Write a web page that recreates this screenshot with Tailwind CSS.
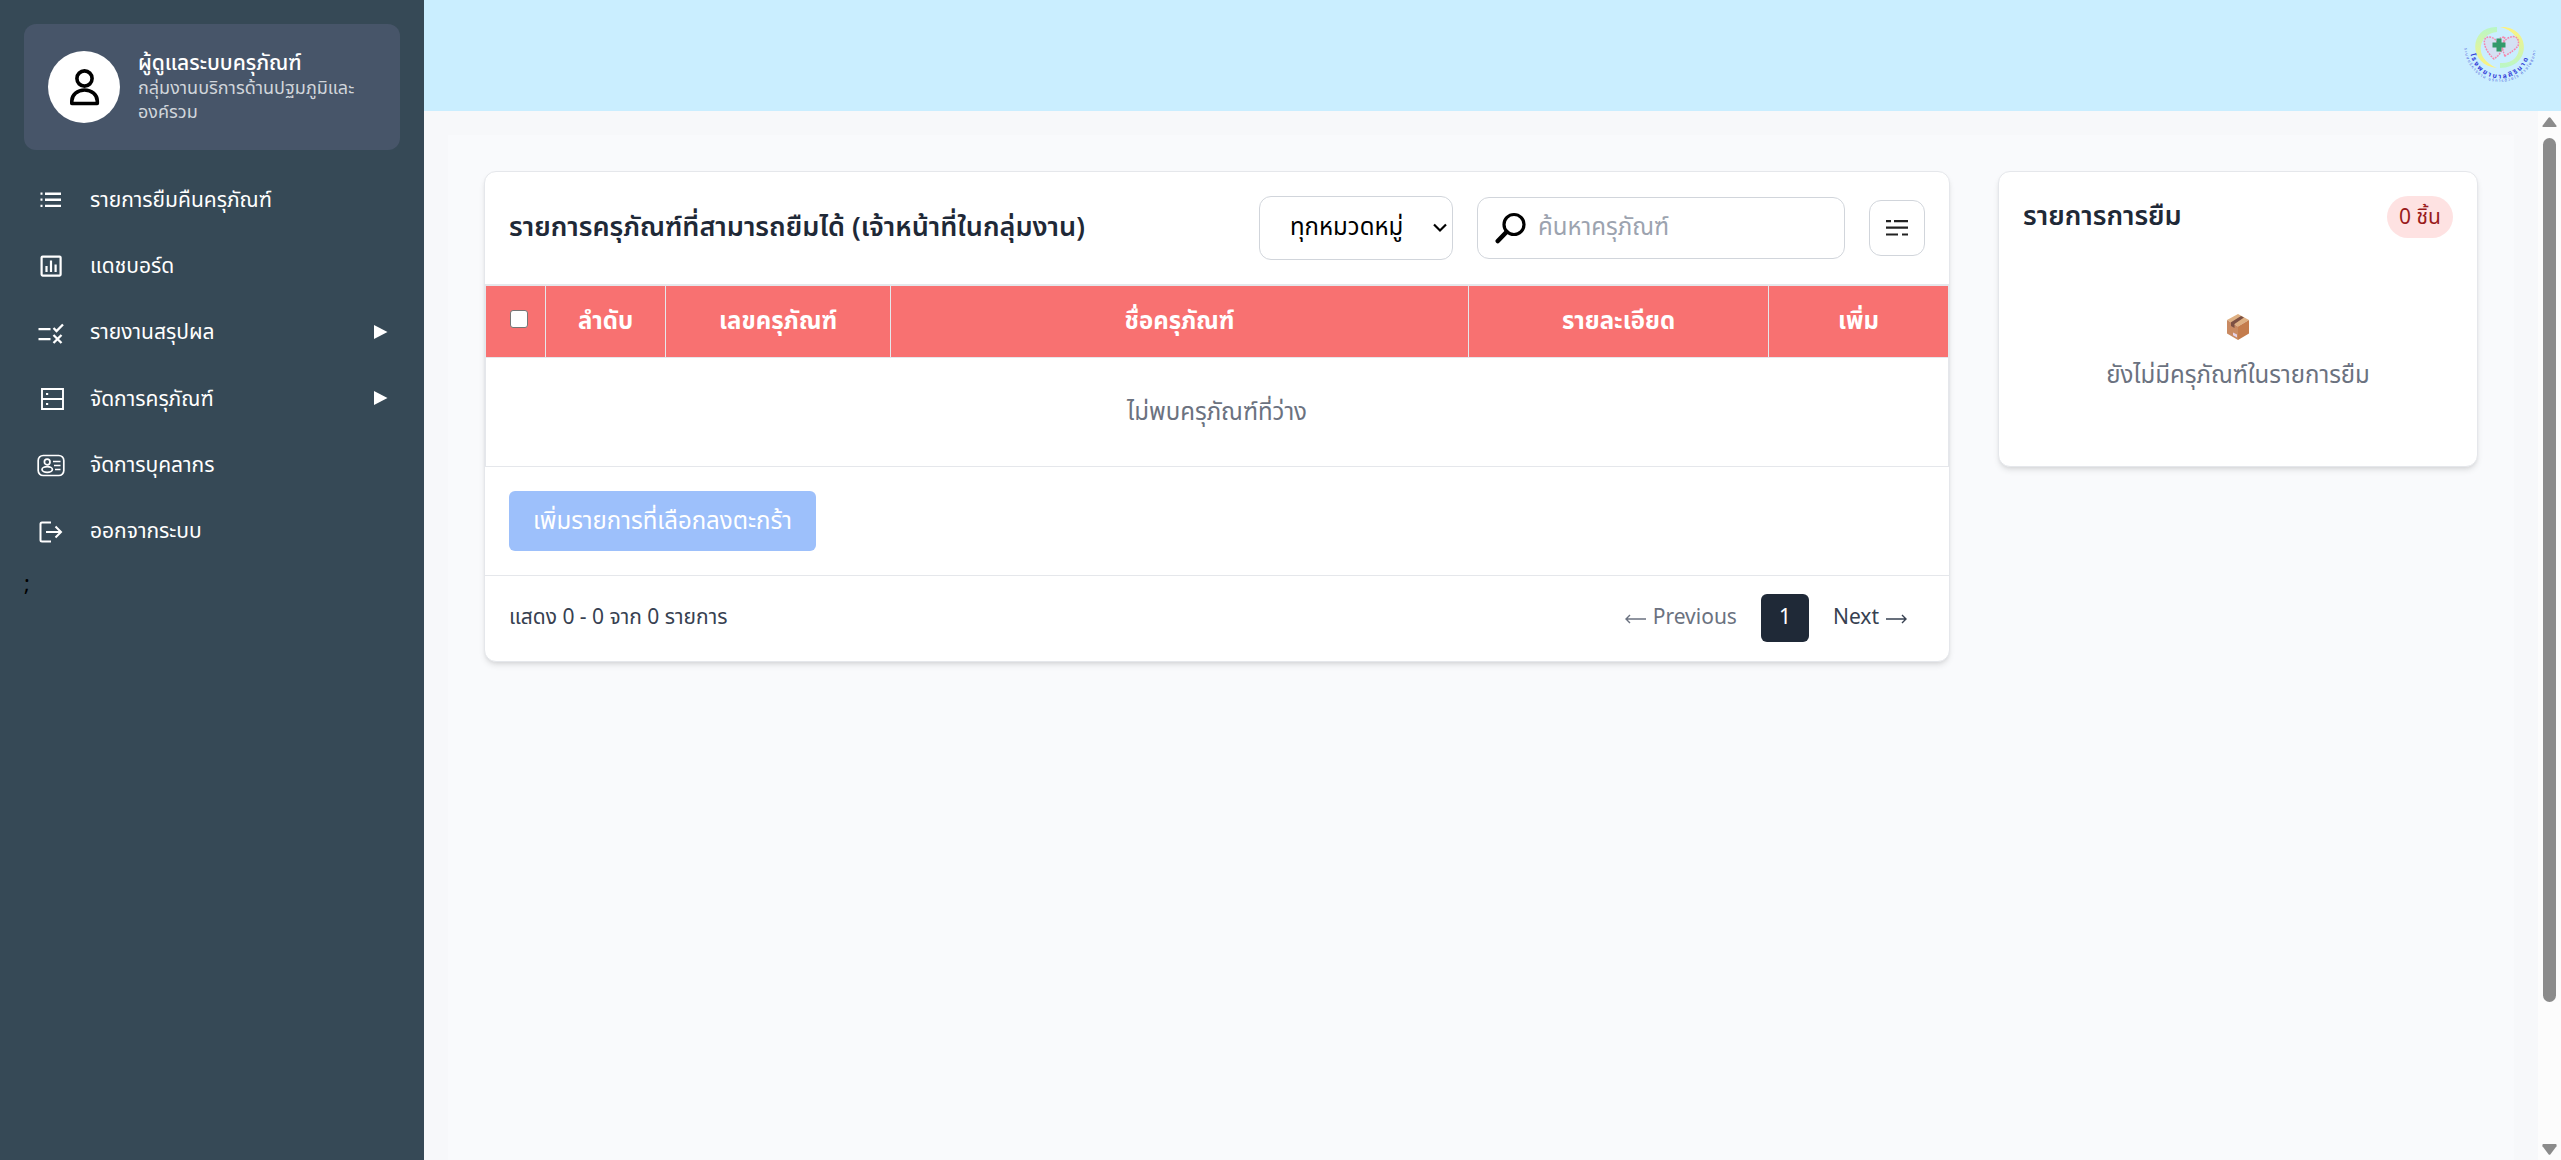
<!DOCTYPE html>
<html lang="th">
<head>
<meta charset="utf-8">
<title>รายการครุภัณฑ์</title>
<script src="https://cdn.jsdelivr.net/npm/@tailwindcss/browser@4"></script>
</head>
<body class="flex h-[1160px] w-[2561px] overflow-hidden bg-[#f7f8fa] font-['Noto_Sans','Noto_Sans_Thai','Noto_Sans_Thai_Looped',sans-serif] text-[21px] leading-[30px] text-black">
<aside class="w-[424px] shrink-0 bg-[#364956] p-6 text-white">
  <div class="flex h-[126px] items-center gap-[18px] rounded-xl bg-[#475569] px-6">
    <div class="flex size-[72px] shrink-0 items-center justify-center rounded-full bg-white">
      <svg class="size-[42px]" viewBox="0 0 42 42" fill="none" stroke="#000" stroke-width="3.600" stroke-linejoin="round"><circle cx="21.500" cy="12.500" r="7.600"/><path d="M8.800 37.500h25.500v-2.500a12.750 11 0 0 0-25.500 0z"/></svg>
    </div>
    <div class="min-w-0 pb-px">
      <div class="text-[21px] leading-[25px] font-medium whitespace-nowrap">ผู้ดูแลระบบครุภัณฑ์</div>
      <div class="text-[18px] leading-6 whitespace-nowrap text-[#d1d5db]">กลุ่มงานบริการด้านปฐมภูมิและ<br>องค์รวม</div>
    </div>
  </div>
  <nav class="mt-[17px] flex flex-col">
    <a class="flex h-[66.300px] items-center px-3"><svg class="mr-[24px] size-[30px]" viewBox="0 0 30 30" fill="#fff"><path d="M9 7.500h16v2.400H9zM9 13.600h16v2.400H9zM9 19.700h16v2.400H9zM4.500 7.500h2v2.200h-2zM4.500 13.600h2v2.200h-2zM4.500 19.700h2v2.200h-2z"/></svg><span class="pb-[2px]">รายการยืมคืนครุภัณฑ์</span></a>
    <a class="flex h-[66.300px] items-center px-3"><svg class="mr-[24px] size-[30px]" viewBox="0 0 30 30" fill="none" stroke="#fff" stroke-width="2.200"><rect x="5.600" y="5.600" width="19" height="19" rx="1"/><path d="M10.500 15v6M15 9.500V21M19.600 13.500V21"/></svg><span class="pb-[2px]">แดชบอร์ด</span></a>
    <a class="flex h-[66.300px] items-center px-3"><svg class="mr-[24px] size-[30px]" viewBox="0 0 30 30" fill="none" stroke="#fff" stroke-width="2.300"><path d="M2.500 11.200h12M2.500 21.200h12M17.500 10l3 3 6.500-6.500M17.500 17l8 8M25.500 17l-8 8"/></svg><span class="pb-[3px]">รายงานสรุปผล</span><svg class="mb-[2px] ml-auto h-4 w-[14px]" viewBox="0 0 14 16" fill="#fff"><path d="M0 1v14l13.500-7z"/></svg></a>
    <a class="flex h-[66.300px] items-center px-3"><svg class="mr-[24px] size-[30px]" viewBox="0 0 30 30" fill="none" stroke="#fff" stroke-width="1.900"><path d="M6 5h21v20H6zM6 15h21"/><path d="M10 10h2.200M10 20h2.200" stroke-width="2.200"/></svg><span class="pb-[3px]">จัดการครุภัณฑ์</span><svg class="mb-[2px] ml-auto h-4 w-[14px]" viewBox="0 0 14 16" fill="#fff"><path d="M0 1v14l13.500-7z"/></svg></a>
    <a class="flex h-[66.300px] items-center px-3"><svg class="mr-[24px] size-[30px]" viewBox="0 0 30 30" fill="none" stroke="#fff" stroke-width="1.700"><rect x="2.200" y="5.500" width="25.600" height="20" rx="5"/><circle cx="11.200" cy="12" r="2.800"/><ellipse cx="11.200" cy="19.500" rx="5.200" ry="2.800"/><path d="M17 11.500h7.500M18 15.500h6.500M19 19.500h5.500"/></svg><span class="pb-[3px]">จัดการบุคลากร</span></a>
    <a class="flex h-[66.300px] items-center px-3"><svg class="mr-[24px] size-[30px]" viewBox="0 0 30 30" fill="none" stroke="#fff" stroke-width="2"><path d="M15 5.500H6Q4.500 5.500 4.500 7v16q0 1.500 1.500 1.500h9M10 15h15M19.500 9.500L25 15l-5.500 5.500"/></svg><span class="pb-1">ออกจากระบบ</span></a>
  </nav>
  <div class="mt-px text-[22px] leading-8 text-black">;</div>
</aside>
<div class="flex min-w-0 flex-1 flex-col">
  <header class="flex h-[111px] shrink-0 justify-end bg-[#caeeff] pt-[18px] pr-[20px]">
    <svg class="h-[74px] w-[80px] overflow-visible" viewBox="0 0 80 74">
      <defs>
        <linearGradient id="ga" x1="0" y1="0" x2="0" y2="1"><stop offset="0" stop-color="#b8f7c8"/><stop offset="1" stop-color="#fff27d"/></linearGradient>
        <linearGradient id="gb" x1="0" y1="0" x2="0" y2="1"><stop offset="0" stop-color="#fff27d"/><stop offset="1" stop-color="#b8f7c8"/></linearGradient>
        <path id="arc1" d="M9.500 36A30 30 0 0 0 68.500 36"/>
        <path id="arc2" d="M3.500 30A35.800 35.800 0 0 0 75 30"/>
      </defs>
      <path fill="url(#ga)" d="M36 9C8 8 6 47 36 50C11 40 18 15 36 14z"/>
      <path fill="url(#gb)" d="M39 9C69 7 73 49 39 50V45C64 47 65 14 39 9z"/>
      <path d="M33 41C22 31 20 18 29 19q5 1 7 5 2-5 8-5c-3 8 0 14-11 22zM44 38c-4-8-3-14 3-18 8-4 12 1 10 8q-3 4-13 10z" fill="#f9b6ce" fill-opacity=".25" stroke="#f586ad" stroke-width="1.500" stroke-dasharray="1.800 1"/>
      <path d="M35.500 20.500h5v4h4v5h-4v4h-5v-4h-4v-5h4z" fill="#329a6b"/>
      <text font-size="6.800" font-weight="700" fill="#3340d8"><textPath href="#arc1" textLength="78">โรงพยาบาลศิรินาด</textPath></text>
      <text font-size="4" fill="#4454d8"><textPath href="#arc2" textLength="110">ระบบบริหารงาน บริการด้วยใจ ห่วงใยสุขภาพ</textPath></text>
    </svg>
  </header>
  <div class="flex min-h-0 flex-1">
    <main class="flex min-w-0 flex-1 px-6 pt-6">
      <div class="flex flex-1 items-start gap-12 bg-[#f9fafc] pt-9 pl-9">
        <section class="w-[1466px] shrink-0 overflow-hidden rounded-xl border-[1.500px] border-[#e5e7eb] bg-white shadow-md">
          <div class="flex h-[112px] items-center px-6 pb-px">
            <h1 class="mr-auto pb-[4px] text-[27px] leading-9 font-semibold text-[#1f2937]">รายการครุภัณฑ์ที่สามารถยืมได้ (เจ้าหน้าที่ในกลุ่มงาน)</h1>
            <div class="flex h-[64px] w-[194px] items-center justify-between rounded-xl border border-[#d1d5db] pr-[5px] pl-[30px] text-2xl"><span class="pb-[3px]">ทุกหมวดหมู่</span><svg class="h-[10px] w-[14px]" viewBox="0 0 14 10" fill="none" stroke="#000" stroke-width="2.200"><path d="M1 1.500l6 6 6-6"/></svg></div>
            <div class="ml-6 flex h-[62px] w-[368px] items-center rounded-xl border border-[#d1d5db] pl-[17px] text-2xl text-[#9ca3af]"><svg class="mr-[12px] h-[32px] w-[31px]" viewBox="0 0 31 32" fill="none" stroke="#000"><circle cx="19" cy="12.500" r="10" stroke-width="3.200"/><path d="M11.500 20L2.800 29" stroke-width="4.600" stroke-linecap="round"/></svg><span class="pb-[3px]">ค้นหาครุภัณฑ์</span></div>
            <div class="ml-6 flex size-[56px] items-center justify-center rounded-xl border border-[#d1d5db]"><svg class="h-[18px] w-[24px]" viewBox="0 0 24 18" stroke="#222" stroke-width="2.200"><path d="M1 2.200h5M9 2.200h14M1 8.700h22M1 15.500h12M17 15.500h6"/></svg></div>
          </div>
          <div class="grid h-[74px] grid-cols-[60px_120px_225px_578px_300px_1fr] border-x border-t-2 border-b border-[#e5e7eb] bg-[#f87171] text-center text-2xl leading-[68px] font-bold text-white">
            <div class="flex items-center border-r border-[#e5e7eb] pb-[5px] pl-6"><div class="size-[18px] rounded-[3px] border-[1.500px] border-[#767676] bg-white"></div></div>
            <div class="border-r border-[#e5e7eb]">ลำดับ</div>
            <div class="border-r border-[#e5e7eb]">เลขครุภัณฑ์</div>
            <div class="border-r border-[#e5e7eb]">ชื่อครุภัณฑ์</div>
            <div class="border-r border-[#e5e7eb]">รายละเอียด</div>
            <div>เพิ่ม</div>
          </div>
          <div class="h-[109px] border-x border-b border-[#e5e7eb] text-center text-2xl leading-[105px] text-[#6b7280]">ไม่พบครุภัณฑ์ที่ว่าง</div>
          <div class="flex h-[109px] items-center border-b border-[#e5e7eb] px-6">
            <button class="h-[60px] w-[307px] rounded-md bg-[#9dc0fb] pb-[2px] text-2xl text-white">เพิ่มรายการที่เลือกลงตะกร้า</button>
          </div>
          <div class="flex h-[85px] items-center pr-[42px] pb-px pl-6 text-[#374151]">
            <span class="mr-auto pb-1">แสดง 0 - 0 จาก 0 รายการ</span>
            <span class="flex items-center gap-[7px] pb-1 text-[#6b7280]"><svg class="mt-[6px] h-[10px] w-[21px]" viewBox="0 0 21 10" fill="none" stroke="currentColor" stroke-width="1.400"><path d="M.8 5H21M5 1L1 5l4 4"/></svg>Previous</span>
            <span class="mx-6 flex size-12 items-center justify-center rounded-md bg-[#1f2937] pb-1 text-white">1</span>
            <span class="flex items-center gap-[7px] pb-1">Next<svg class="mt-[6px] h-[10px] w-[21px]" viewBox="0 0 21 10" fill="none" stroke="currentColor" stroke-width="1.400"><path d="M0 5h20.200M16 1l4 4-4 4"/></svg></span>
          </div>
        </section>
        <section class="h-[296px] w-[480px] shrink-0 rounded-xl border-[1.500px] border-[#e5e7eb] bg-white px-6 pt-6 shadow-md">
          <div class="flex h-[42px] items-center justify-between">
            <h2 class="pb-[4px] text-[27px] font-semibold text-[#1f2937]">รายการการยืม</h2>
            <span class="flex h-[42px] w-[66px] items-center justify-center rounded-full bg-[#fee2e2] pb-[3px] text-[21px] text-[#991b1b]">0 ชิ้น</span>
          </div>
          <div class="mt-[76px] flex flex-col items-center text-2xl text-[#6b7280]">
            <svg class="h-[26px] w-[22px]" viewBox="0 0 22 26"><path d="M11 0l11 6-11 6.500L0 6z" fill="#deb083"/><path d="M0 6l11 6.500V26L0 19.500z" fill="#c98a62"/><path d="M22 6l-11 6.500V26l11-6.500z" fill="#c47c4c"/><path d="M4 8.300L14 2l3 1.600L7.500 10v4L4 12z" fill="#7c5043"/><path d="M6 18.500l4 2v3l-4-2.200z" fill="#e4d3e8"/></svg>
            <p class="mt-[16px] leading-9">ยังไม่มีครุภัณฑ์ในรายการยืม</p>
          </div>
        </section>
      </div>
    </main>
    <div class="flex w-[23px] shrink-0 flex-col items-center bg-[#fcfcfc] pt-[6px] pb-[5px]">
      <svg class="h-[11px] w-[15px]" viewBox="0 0 15 11" fill="#8b8b8b"><path d="M6.500.8q1-1 2 0l6 8q.5 1.200-.8 1.200H1.300Q0 10 .5 8.800z"/></svg>
      <div class="mt-[10px] h-[864px] w-[13px] rounded-full bg-[#8b8b8b]"></div>
      <svg class="mt-auto h-[12px] w-[15px]" viewBox="0 0 15 12" fill="#8b8b8b"><path d="M6.500 11.200q1 1 2 0l6-8Q15 1 13.700 1H1.300Q0 1 .5 3.200z"/></svg>
    </div>
  </div>
</div>
</body>
</html>
